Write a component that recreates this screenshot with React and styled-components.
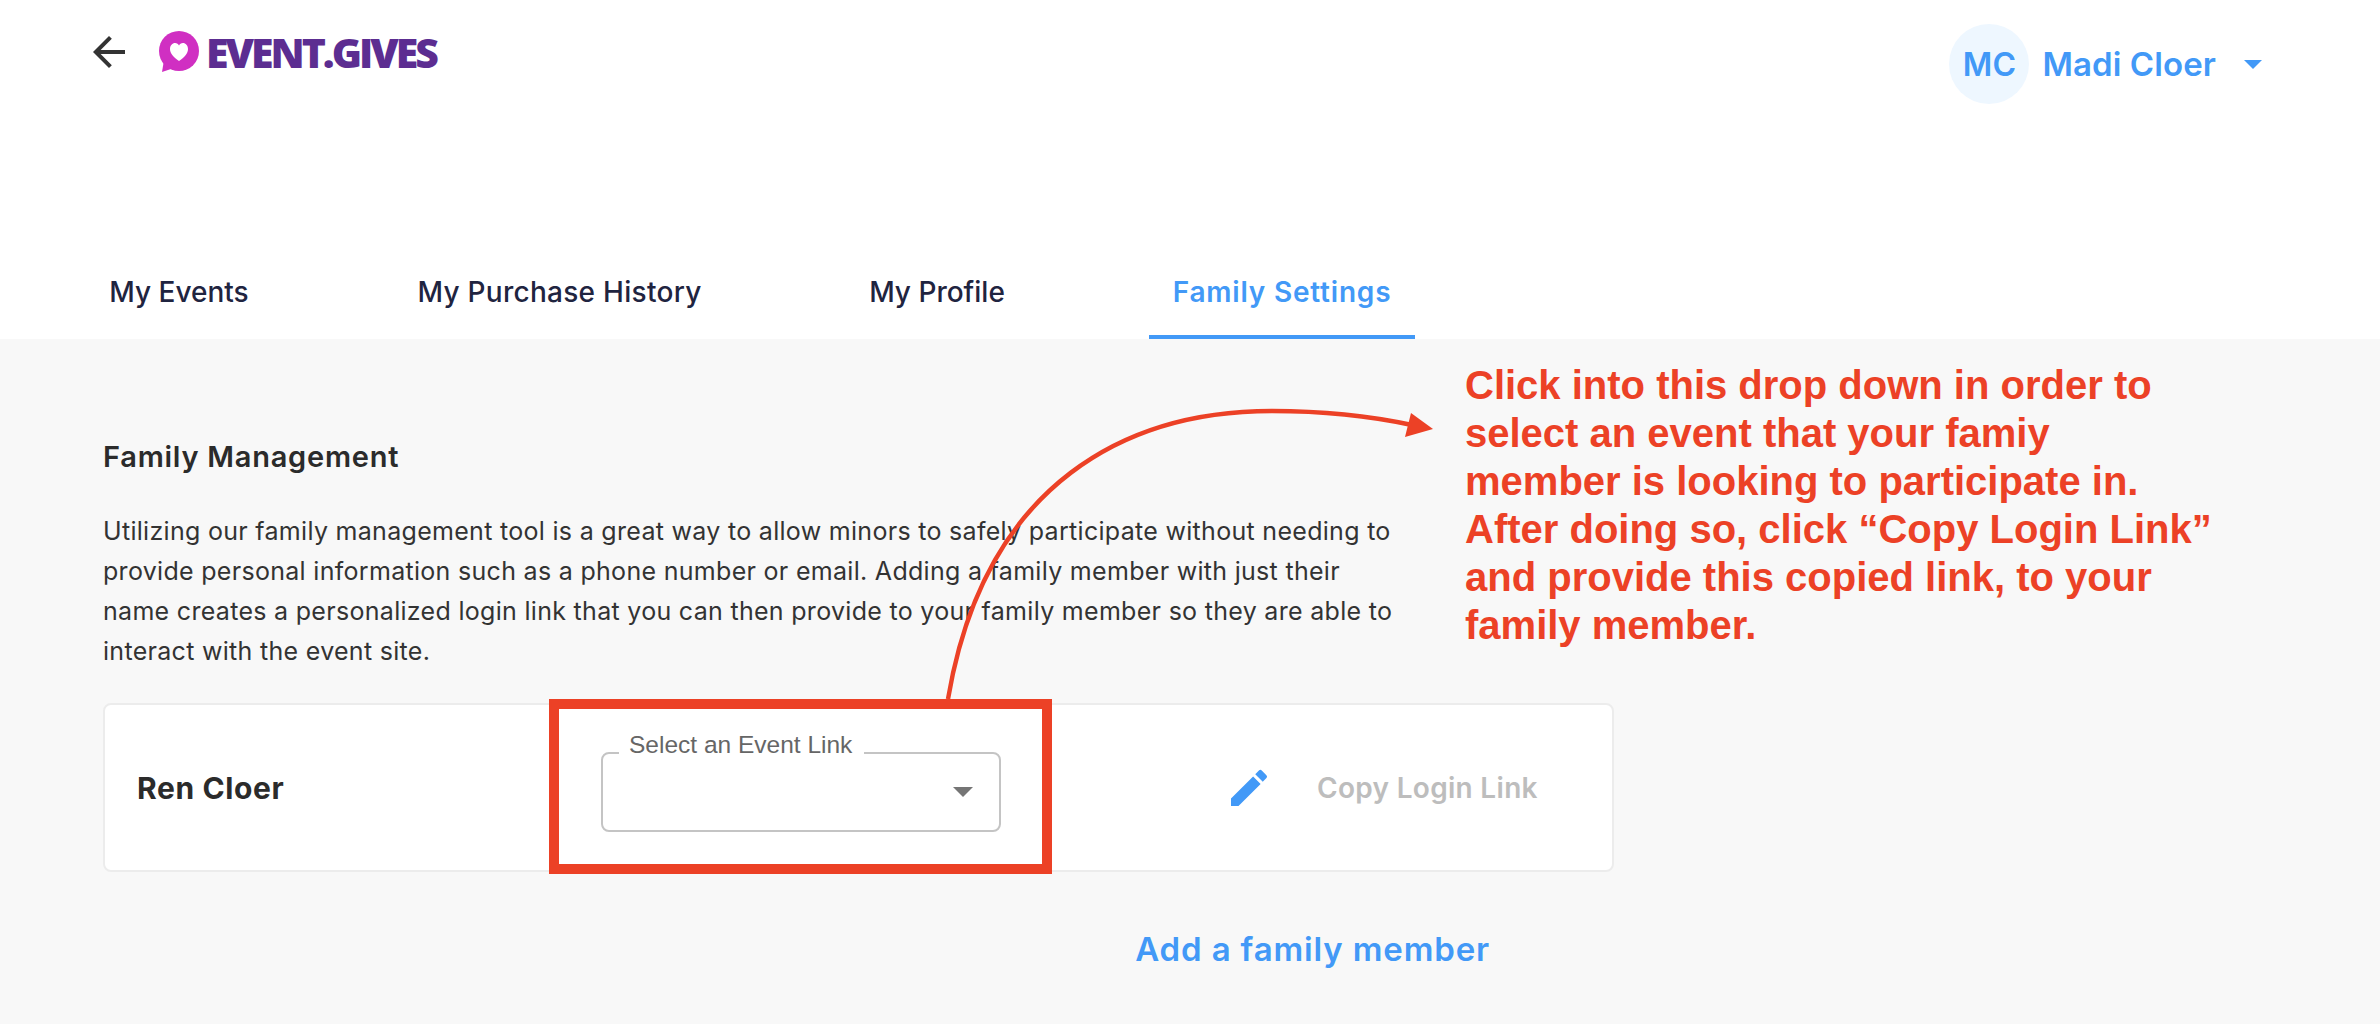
import React from 'react'
import styled, { createGlobalStyle } from 'styled-components'

const GlobalStyle = createGlobalStyle`
    html, body {
        margin: 0;
        padding: 0;
        background: #ffffff;
    }
    body {
        font-family: "Inter", "Open Sans", sans-serif;
    }
`

const Page = styled.div`
    position: relative;
    width: 2380px;
    height: 1024px;
    overflow: hidden;
    background: #ffffff;
    display: flex;
    flex-direction: column;
`

const Header = styled.header`
    height: 208px;
    display: flex;
    justify-content: space-between;
    align-items: flex-start;
    padding: 0 118px 0 85px;
    flex-shrink: 0;
`

const Brand = styled.div`
    display: flex;
    align-items: center;
    gap: 26px;
    padding-top: 28px;
`

const Logo = styled.div`
    display: flex;
    align-items: center;
    gap: 5px;
`

const LogoText = styled.span`
    font-family: "Open Sans", sans-serif;
    font-weight: 800;
    font-size: 41px;
    line-height: 46px;
    letter-spacing: -3px;
    color: #5c2d91;
`

const UserMenu = styled.div`
    display: flex;
    align-items: center;
    padding-top: 24px;
`

const Avatar = styled.div`
    width: 80px;
    height: 80px;
    border-radius: 50%;
    background: #eef7ff;
    color: #4299f7;
    display: flex;
    align-items: center;
    justify-content: center;
    font-weight: 600;
    font-size: 32px;
    margin-right: 13px;
`

const UserName = styled.span`
    color: #4299f7;
    font-weight: 600;
    font-size: 33px;
    letter-spacing: 0.1px;
    margin-right: 28px;
`

const Tabs = styled.nav`
    height: 131px;
    flex-shrink: 0;
    display: flex;
    align-items: flex-end;
    gap: 121px;
    padding-left: 85px;
`

const Tab = styled.div`
    width: ${p => p.$width}px;
    height: 92px;
    box-sizing: border-box;
    display: flex;
    align-items: center;
    justify-content: center;
    font-weight: ${p => (p.$active ? 600 : 500)};
    font-size: 28px;
    letter-spacing: ${p => p.$spacing || 0}px;
    color: ${p => (p.$active ? '#4299f7' : '#1f2440')};
    border-bottom: 4px solid ${p => (p.$active ? '#4299f7' : 'transparent')};
    padding-top: 1px;
`

const Main = styled.main`
    flex: 1;
    background: #f8f8f8;
    padding: 98px 0 0 103px;
`

const Heading = styled.h2`
    margin: 0;
    font-weight: 600;
    font-size: 29px;
    line-height: 40px;
    letter-spacing: 0.75px;
    color: #2b2b2b;
`

const Intro = styled.p`
    margin: 34px 0 0;
    font-weight: 400;
    font-size: 25px;
    line-height: 40px;
    letter-spacing: 0.3px;
    color: #333333;
    white-space: nowrap;
`

const Card = styled.section`
    position: relative;
    box-sizing: border-box;
    width: 1511px;
    height: 169px;
    margin-top: 32px;
    background: #ffffff;
    border: 2px solid #ececec;
    border-radius: 8px;
    display: flex;
    align-items: center;
`

const MemberName = styled.div`
    width: 496px;
    box-sizing: border-box;
    padding-left: 32px;
    font-weight: 700;
    font-size: 30px;
    letter-spacing: 0.6px;
    color: #2b2b2b;
`

const SelectBox = styled.div`
    position: relative;
    box-sizing: border-box;
    width: 400px;
    height: 80px;
    margin-top: 9px;
    border: 2px solid #c4c4c4;
    border-radius: 8px;
    display: flex;
    align-items: center;
    justify-content: flex-end;
    padding-right: 26px;
`

const SelectLabel = styled.span`
    position: absolute;
    left: 16px;
    top: -21px;
    padding: 0 12px 0 10px;
    background: #ffffff;
    font-family: "Liberation Sans", Arial, sans-serif;
    font-size: 24.5px;
    line-height: 24px;
    color: #666666;
    white-space: nowrap;
`

const EditIcon = styled.svg`
    width: 48px;
    height: 48px;
    margin-left: 224px;
    fill: #4299f7;
`

const CopyLink = styled.span`
    margin-left: 44px;
    font-weight: 600;
    font-size: 28px;
    letter-spacing: 0.3px;
    color: #bdbdbd;
`

const Highlight = styled.div`
    position: absolute;
    left: 444px;
    top: -6px;
    box-sizing: border-box;
    width: 503px;
    height: 175px;
    border: 10px solid #ec4126;
    pointer-events: none;
`

const AddRow = styled.div`
    width: 1511px;
    box-sizing: border-box;
    margin-top: 57px;
    padding-right: 124px;
    display: flex;
    justify-content: flex-end;
`

const AddLink = styled.a`
    font-weight: 600;
    font-size: 33px;
    line-height: 40px;
    letter-spacing: 0.85px;
    color: #4299f7;
`

const ArrowLayer = styled.svg`
    position: absolute;
    left: 0;
    top: 0;
    pointer-events: none;
`

const Note = styled.div`
    position: absolute;
    left: 1465px;
    top: 361px;
    font-family: "Liberation Sans", Arial, sans-serif;
    font-weight: 700;
    font-size: 40px;
    line-height: 48px;
    color: #ec4126;
    white-space: nowrap;
`

export default function App() {
    return (
        <Page>
            <GlobalStyle />
            <Header>
                <Brand>
                    <svg width="48" height="48" viewBox="0 0 24 24" fill="#333333">
                        <path d="M20 11H7.83l5.59-5.59L12 4l-8 8 8 8 1.41-1.41L7.83 13H20v-2z" />
                    </svg>
                    <Logo>
                        <svg width="42" height="42" viewBox="0 0 42 42">
                            <circle cx="20" cy="20" r="20" fill="#d02fc2" />
                            <polygon points="3,41 5,29 15,37" fill="#d02fc2" />
                            <path
                                d="M20 30C14 26 11 22 11 18C11 14.5 13.5 12 16 12C18 12 19.3 13 20 14.5C20.7 13 22 12 24 12C26.5 12 29 14.5 29 18C29 22 26 26 20 30Z"
                                fill="#ffffff"
                            />
                        </svg>
                        <LogoText>EVENT.GIVES</LogoText>
                    </Logo>
                </Brand>
                <UserMenu>
                    <Avatar>MC</Avatar>
                    <UserName>Madi Cloer</UserName>
                    <svg width="18" height="9" viewBox="0 0 18 9" fill="#4299f7">
                        <polygon points="0,0 18,0 9,9" />
                    </svg>
                </UserMenu>
            </Header>

            <Tabs>
                <Tab $width={188}>My Events</Tab>
                <Tab $width={331} $spacing={0.28}>My Purchase History</Tab>
                <Tab $width={182}>My Profile</Tab>
                <Tab $width={266} $spacing={0.8} $active>Family Settings</Tab>
            </Tabs>

            <Main>
                <Heading>Family Management</Heading>
                <Intro>
                    Utilizing our family management tool is a great way to allow minors to safely participate without needing to<br />
                    provide personal information such as a phone number or email. Adding a family member with just their<br />
                    name creates a personalized login link that you can then provide to your family member so they are able to<br />
                    interact with the event site.
                </Intro>
                <Card>
                    <MemberName>Ren Cloer</MemberName>
                    <SelectBox>
                        <SelectLabel>Select an Event Link</SelectLabel>
                        <svg width="20" height="10" viewBox="0 0 20 10" fill="#757575">
                            <polygon points="0,0 20,0 10,10" />
                        </svg>
                    </SelectBox>
                    <EditIcon viewBox="0 0 24 24">
                        <path d="M3 17.25V21h3.75L17.81 9.94l-3.75-3.75L3 17.25zM20.71 7.04a.996.996 0 0 0 0-1.41l-2.34-2.34a.996.996 0 0 0-1.41 0l-1.83 1.83 3.75 3.75 1.83-1.83z" />
                    </EditIcon>
                    <CopyLink>Copy Login Link</CopyLink>
                    <Highlight />
                </Card>
                <AddRow>
                    <AddLink>Add a family member</AddLink>
                </AddRow>
            </Main>

            <ArrowLayer width="2380" height="1024" viewBox="0 0 2380 1024">
                <path
                    d="M948 699C985 480 1130 411 1272 411C1320 411 1370 416 1412 425"
                    fill="none"
                    stroke="#ec4126"
                    strokeWidth="4.5"
                />
                <polygon points="1433,429 1411,413 1405,437" fill="#ec4126" />
            </ArrowLayer>

            <Note>
                Click into this drop down in order to<br />
                select an event that your famiy<br />
                member is looking to participate in.<br />
                After doing so, click “Copy Login Link”<br />
                and provide this copied link, to your<br />
                family member.
            </Note>
        </Page>
    )
}
